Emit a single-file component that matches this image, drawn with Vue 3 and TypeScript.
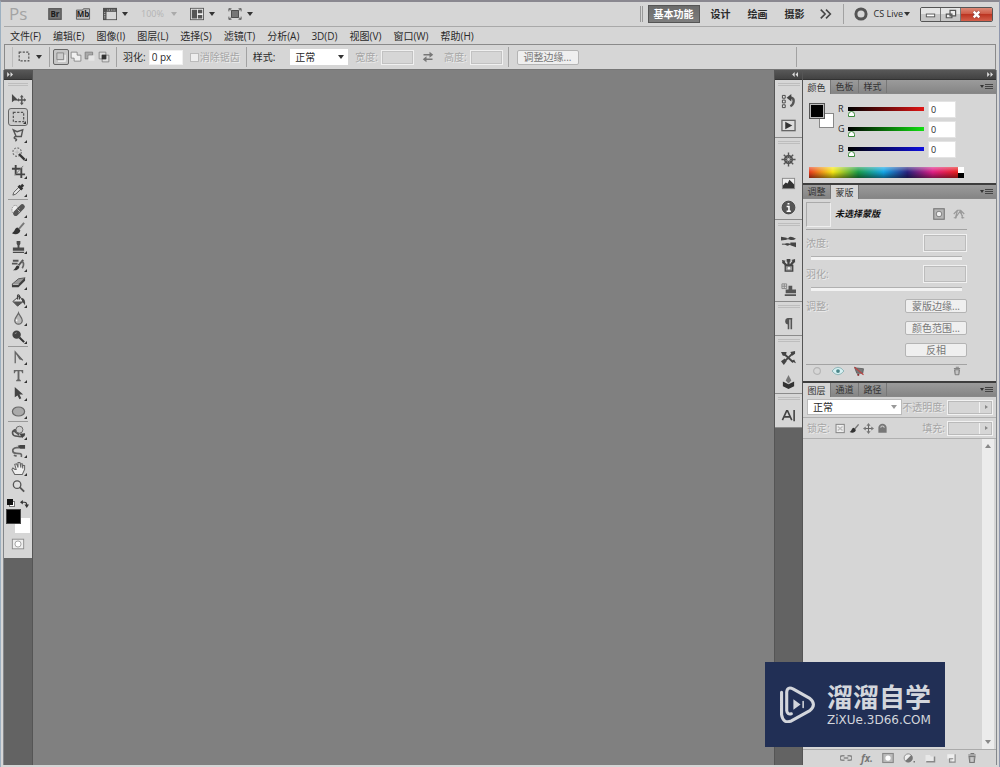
<script setup lang="ts">
import { ref } from 'vue'

const icons: Record<string, string> = {
  move: '<path d="M1 2v9l2.500-2H8z" fill="#4a4a4a"/><path d="M11.500 4.500v8M7.500 8.500h8" stroke="#555" stroke-width="1.500" fill="none"/><path d="M9.500 5.500l2-2.500 2 2.500zM9.500 11.500l2 2.500 2-2.500zM8.500 6.500l-2 2 2 2zM14 6.500l2 2-2 2z" fill="#555"/>',
  marquee: '<rect x="2.500" y="2.500" width="11" height="10" fill="none" stroke="#555" stroke-width="1.300" stroke-dasharray="2.500 1.500"/>',
  lasso: '<path d="M2.500 2l4 2 6-2-1.500 7-5.500 0L2.500 2zM5.500 9c-2 0-3 2-1 2.500s2 1.500 0 2.500" fill="none" stroke="#555" stroke-width="1.500"/>',
  wand: '<circle cx="6.500" cy="6.500" r="4.500" fill="none" stroke="#777" stroke-width="1.300" stroke-dasharray="2 1.500"/><path d="M8.500 8.500l6 6" stroke="#333" stroke-width="2.500"/><path d="M6.500 4v5M4 6.500h5" stroke="#bbb"/>',
  crop: '<path d="M5 1v10h10M1 5h10v10" fill="none" stroke="#444" stroke-width="2"/><path d="M4 12L13 2" stroke="#777"/>',
  dropper: '<path d="M2 14l1-3 6-6 2 2-6 6z" fill="#e8e8e8" stroke="#555"/><path d="M8 4l4 4M10 6l3-3" stroke="#333" stroke-width="3"/>',
  heal: '<ellipse cx="4.500" cy="7.500" rx="3.500" ry="5" fill="#eee" stroke="#888" stroke-dasharray="1.500 1"/><path d="M5 11l7-7" stroke="#555" stroke-width="5.500" stroke-linecap="round"/><path d="M7 7l3 3M8 10h.5M9 6h.5" stroke="#bbb"/>',
  brush: '<path d="M8 9l6-7" stroke="#777" stroke-width="2"/><path d="M1 13c3-1 3-6 6-6l3 3c-1 4-5 5-9 3z" fill="#333"/>',
  stamp: '<path d="M6 2h4v3L9 7v2h5v3.500H2V9h5V7L6 5zM2 13.500h12V15H2z" fill="#4a4a4a"/>',
  history: '<path d="M2 4h6M1 7h6M8 9l5-6" stroke="#555" stroke-width="2"/><path d="M2 14c3-1 3-5 5-5l2 1c0 3-4 5-7 4z" fill="#333"/><path d="M11 5c3 0 3 4 1 7" fill="none" stroke="#666" stroke-width="1.800"/>',
  eraser: '<path d="M1 10l7-6 7-1-7 7z" fill="#999" stroke="#555"/><path d="M1 10h7v3H1zM8 10l7-7v3l-7 7z" fill="#3f3f3f"/><path d="M2 10h6" stroke="#ccc"/>',
  bucket: '<path d="M2 9l7-6 4 6-6 5z" fill="#ddd" stroke="#444"/><path d="M2 9l11 0-6 5z" fill="#555"/><path d="M7 7V2.500Q8 1 9 3v4" fill="none" stroke="#444" stroke-width="1.300"/><path d="M11 5q5 1 4 8L12 9z" fill="#444"/>',
  drop: '<path d="M8 2c1 3 4 5 4 8a4 4 0 01-8 0c0-3 3-5 4-8z" fill="#bbb" stroke="#666" stroke-width="1.300"/><path d="M6 9v2" stroke="#fff" stroke-width="1.500"/>',
  dodge: '<circle cx="6" cy="6" r="4.500" fill="#444"/><path d="M9 9l5 5" stroke="#333" stroke-width="2.200"/><path d="M4 5l2-1" stroke="#999"/>',
  pen: '<path d="M4.500 14V2l8 9" fill="none" stroke="#666" stroke-width="1.400"/><path d="M4 2l9 9-4-1z" fill="#666"/>',
  type: '<path d="M3 2h10v3.500h-1L11 3.500H9V12l1.500 1v1h-5v-1L7 12V3.500H5L4 5.500H3z" fill="#666"/>',
  pick: '<path d="M4 1v11l3-2 2 4 2-1-2-4h4z" fill="#444"/>',
  oval: '<ellipse cx="8" cy="8" rx="6.500" ry="4.800" fill="#aaa" stroke="#666" stroke-width="1.300"/>',
  orbit: '<path d="M6 5c-6 0-6 7 1 7 4 1 8 0 7-3M8 10l-4-3 5-2z" fill="none" stroke="#555" stroke-width="1.800"/><circle cx="9" cy="5" r="3.700" fill="#ccc" stroke="#666"/><path d="M9 9l6 0-3 5z" fill="#444"/>',
  camera: '<path d="M10 5H6C0 6 1 11 6 11c4 0 6 0 5 4M3 13l3 1" fill="none" stroke="#666" stroke-width="1.800"/><path d="M10 2h5v4h-5zM7 3l3-1v4z" fill="#444"/>',
  hand: '<path d="M4 9L2 7.500 1 9l3 5.500h8l2.500-5.500V5l-2-.5V8l-.5-5-1.500 0V7L9.500 1.500H7.500V7L6 3 4 3.500 5.500 9z" fill="#eee" stroke="#666" stroke-width="1.100"/>',
  lens: '<circle cx="6.500" cy="6" r="4" fill="#ddd" stroke="#555" stroke-width="1.400"/><path d="M9.500 9l4.500 4.500" stroke="#555" stroke-width="2"/>',
  quick: '<rect x="1.500" y="2.500" width="13" height="11" fill="#eee" stroke="#888"/><circle cx="8" cy="8" r="3.500" fill="#fff" stroke="#999"/>',
  histpanel: '<path d="M1.500 1.500h3v3h-3zM1.500 6.500h3v3h-3zM1.500 11.500h3v3h-3z" fill="#ddd" stroke="#444"/><path d="M10 4h1c4 1 3 7-1 9" stroke="#555" stroke-width="2.500" fill="none"/><path d="M6 4l5-4v8z" fill="#444"/>',
  play: '<rect x="1" y="2.500" width="14" height="11" fill="#ddd" stroke="#666" stroke-width="1.400"/><path d="M4.500 4v8L12 8z" fill="#333"/>',
  wheel: '<circle cx="8" cy="8" r="4" fill="none" stroke="#444" stroke-width="1.600"/><path d="M8 .500v15M.500 8h15M3 3l10 10M13 3L3 13" stroke="#555" stroke-width="1.500"/><circle cx="8" cy="8" r="1.500" fill="#ccc"/>',
  histo: '<rect x="1.500" y="2.500" width="13" height="11" fill="#eee" stroke="#888"/><path d="M2 13V10l3-3 2 1 2-4 3 3 2 2v4z" fill="#333"/>',
  info: '<circle cx="8" cy="8" r="6.800" fill="#555" stroke="#444"/><path d="M7 4h2M6 7h2.500v4.500M6 12h4.500" stroke="#fff" stroke-width="1.700" fill="none"/>',
  sliders: '<path d="M1 5h13M1 11h14" stroke="#777" stroke-width="1.700"/><path d="M0 3l6 1v2L0 7zM8 4c2-2 4-1 8 1-3 2-6 2-8 0zM4 11c2-2 4-1 6 0-2 2-4 2-6 0zM10 9h6v5l-6-2z" fill="#444"/>',
  brushes: '<path d="M4.500 8h8v6h-8z" fill="#999" stroke="#444" stroke-width="1.400"/><path d="M6 8L2 4M8 8V2M10 8l4-5" stroke="#444" stroke-width="2.500"/><path d="M1 2l4 1-3 3zM6 1h4v3H6zM11 2l4-1v4z" fill="#444"/><circle cx="8.500" cy="11" r="1.300" fill="#eee"/>',
  clone: '<path d="M8 4h4v4h4v4H5V8h3zM4 13h12v2H4z" fill="#555"/><path d="M1 2h5v5H1zM1 4.500h5M3.500 2v5" fill="none" stroke="#888"/>',
  para: '<path d="M8 14V3M11 14V3M7 3h5" stroke="#555" stroke-width="1.700"/><path d="M8 2a3.500 3.500 0 000 7z" fill="#555"/>',
  cross: '<path d="M2 3l11 10M3 13L13 3" stroke="#444" stroke-width="2"/><path d="M0 2l6 0-1 4-3 0zM10 2l5-1 0 3-3 2zM0 12l4-3 2 3-3 4zM11 12l3-2 2 4z" fill="#444"/>',
  book: '<path d="M2 8l6 3 6-3v5l-6 3-6-3z" fill="#333"/><path d="M5 7l3-6 3 6-3 3z" fill="#777"/>',
  achar: '<path d="M1.500 13L6 3h1l4.500 10M3.500 9.500h6M14 2v12" fill="none" stroke="#444" stroke-width="1.700"/>',
  bridge: '<rect x="1" y="2" width="14" height="12" fill="#777" stroke="#555" stroke-width="1.500"/>',
  mini: '<path d="M.500 3.500h7l1-1.500h7v12H.500z" fill="#bbb" stroke="#555"/>',
  arrange: '<rect x="0" y="1" width="16" height="14" fill="#505050"/><path d="M4 5.500h11V14H4z" fill="#d8d8d8"/><path d="M5 3.500h10M2 6v8" stroke="#eee" stroke-dasharray="1 1"/>',
  grid: '<rect x=".500" y="1.500" width="15" height="13" fill="#eee" stroke="#555"/><path d="M2 3h6v10H2zM9 3h5v4H9zM9 9h5v4H9z" fill="#555"/>',
  screen: '<path d="M4 4h8v8H4z" fill="#777" stroke="#444"/><path d="M1 5V2h3M12 2h3v3M1 11v3h3M12 14h3v-3M1 2l3 2M15 2l-3 2M1 14l3-2M15 14l-3-2" fill="none" stroke="#555"/>',
  m0: '<path d="M2.500 2.500h9v9h-9z" fill="#ccc" stroke="#777"/><path d="M4 13.500h9.500V5" fill="none" stroke="#f5f5f5" stroke-width="1.500"/>',
  m1: '<path d="M1.500 1.500h8v4h5v8h-9v-4h-4z" fill="#f0f0f0" stroke="#777"/>',
  m2: '<path d="M1.500 1.500h10v4h-6v5h-4z" fill="#aaa" stroke="#777"/><path d="M6 6h8v7H6z" fill="#e5e5e5"/>',
  m3: '<path d="M1.500 1.500h9v9h-9zM5.500 5.500h9v9h-9z" fill="#ddd" stroke="#777"/><path d="M5 5h6v6H5z" fill="#333"/>',
  swap: '<path d="M2 5h11M3 11h11" stroke="#777" stroke-width="1.700"/><path d="M10 1l5 4-5 4zM6 7l-5 4 5 4z" fill="#777"/>',
  ring: '<circle cx="8" cy="8" r="5.800" fill="none" stroke="#555" stroke-width="3.400"/>',
  more: '<path d="M2 3l5 5-5 5M8 3l5 5-5 5" fill="none" stroke="#444" stroke-width="1.800"/>',
  maskadd: '<rect x="1" y="1" width="14" height="14" fill="#b5b5b5" stroke="#777" stroke-width="1.500"/><circle cx="8" cy="8" r="3.700" fill="#eee" stroke="#666"/>',
  vector: '<path d="M3 14L6 3h4l3 11M4 12l5-7 4 6M1 8l5-5M10 3l5 5M1 13h4M11 13h4" fill="none" stroke="#999" stroke-width="1.500"/>',
  circ: '<circle cx="8" cy="8" r="4.500" fill="none" stroke="#b5b5b5" stroke-width="1.500"/>',
  eye: '<path d="M0 8q8-10 16 0-8 10-16 0z" fill="#d6f0f2" stroke="#7aa5a8"/><circle cx="8" cy="8" r="2.500" fill="#4a8589"/>',
  cart: '<path d="M2 3l3 1 9 1-1 6H5z" fill="#777" stroke="#555"/><path d="M2 3l12 10" stroke="#b44" stroke-width="1.500"/><circle cx="7" cy="13" r="1.500" fill="#833"/>',
  trash: '<path d="M4 6h8l-1 8H5zM3 4h10M6 2h5" fill="#aaa" stroke="#777" stroke-width="1.400"/><path d="M7 7v6M9 7v6" stroke="#ddd"/>',
  link: '<path d="M6 5H3a3 3 0 000 6h3M10 5h3a3 3 0 010 6h-3M5 8h6" fill="none" stroke="#888" stroke-width="2"/>',
  mask: '<rect x="1" y="2" width="14" height="12" fill="#bbb" stroke="#888" stroke-width="1.500"/><circle cx="8" cy="8" r="3.500" fill="#fff"/>',
  adjust: '<circle cx="7" cy="8" r="5.500" fill="#eee" stroke="#777"/><path d="M11 4l-8 8a5.500 5.500 0 008-8z" fill="#777"/><path d="M14 13h2" stroke="#777" stroke-width="2"/>',
  folder: '<path d="M2 4h6l1 2h5v7H2z" fill="#e8e8e8"/><path d="M3 13h11V6" fill="none" stroke="#888" stroke-width="2"/>',
  page: '<path d="M3 3h11v11H9V9H3z" fill="#eee"/><path d="M13.500 3v10.500H6V9h5" fill="none" stroke="#888" stroke-width="1.500"/>',
  pixels: '<rect x="1.500" y="2" width="12" height="12" fill="#eee" stroke="#888" stroke-width="1.500"/><path d="M4 5l7 6M11 5l-7 6" stroke="#bbb" stroke-width="2"/>',
  cross4: '<path d="M8 2v12M2 8h12" stroke="#666" stroke-width="1.500"/><path d="M5 4l3-4 3 4zM5 12l3 4 3-4zM4 5L0 8l4 3zM12 5l4 3-4 3z" fill="#777"/>',
  lock: '<path d="M2 14V7a6 6 0 0112 0v7z" fill="#777"/><path d="M5.500 7a2.500 2.500 0 015 0" fill="none" stroke="#ccc" stroke-width="1.500"/>',
  swapc: '<path d="M3 4h5q4 0 4 5" fill="none" stroke="#333" stroke-width="2"/><path d="M5 0v8L0 4zM8 8h8l-4 6z" fill="#333"/>',
}

const menus = ['文件(F)', '编辑(E)', '图像(I)', '图层(L)', '选择(S)', '滤镜(T)', '分析(A)', '3D(D)', '视图(V)', '窗口(W)', '帮助(H)']
const toolGroups = [
  ['move', 'marquee', 'lasso', 'wand', 'crop', 'dropper'],
  ['heal', 'brush', 'stamp', 'history', 'eraser', 'bucket', 'drop', 'dodge'],
  ['pen', 'type', 'pick', 'oval'],
  ['orbit', 'camera', 'hand', 'lens'],
]
const plainTools = ['move', 'lens']
const dockGroups = [['histpanel', 'play'], ['wheel', 'histo', 'info'], ['sliders', 'brushes', 'clone'], ['para'], ['cross', 'book'], ['achar']]
const activeTool = ref('marquee')
const mode = ref('m0')
const workspace = ref('基本功能')
const channels = ref([
  { name: 'R', value: 0, cls: 'red' },
  { name: 'G', value: 0, cls: 'green' },
  { name: 'B', value: 0, cls: 'blue' },
])
const maskButtons = ['蒙版边缘...', '颜色范围...', '反相']
</script>

<template>
  <div class="app">
    <header class="topbar">
      <span class="ps">Ps</span>
      <button class="ic badge br" aria-label="Bridge"><svg viewBox="0 0 16 16" v-html="icons.bridge" /><span>Br</span></button>
      <button class="ic badge mb" aria-label="Mini Bridge"><svg viewBox="0 0 16 16" v-html="icons.mini" /><span>Mb</span></button>
      <button class="drop" aria-label="View extras"><svg viewBox="0 0 16 16" v-html="icons.arrange" /><i class="tri" /></button>
      <button class="drop zoom">100%<i class="tri" /></button>
      <button class="drop" aria-label="Arrange documents"><svg viewBox="0 0 16 16" v-html="icons.grid" /><i class="tri" /></button>
      <button class="drop" aria-label="Screen mode"><svg viewBox="0 0 16 16" v-html="icons.screen" /><i class="tri" /></button>
      <div class="right">
        <i class="grip2" />
        <nav class="spaces">
          <button v-for="w in ['基本功能', '设计', '绘画', '摄影']" :key="w" :class="{ on: w === workspace }" @click="workspace = w">{{ w }}</button>
        </nav>
        <button class="ic more" aria-label="More"><svg viewBox="0 0 16 16" v-html="icons.more" /></button>
        <i class="vline" />
        <button class="cslive"><svg viewBox="0 0 16 16" v-html="icons.ring" />CS Live<i class="tri" /></button>
        <div class="win">
          <button aria-label="Minimize"><svg viewBox="0 0 20 14"><rect x="5.500" y="6.500" width="9" height="3" fill="#fff" stroke="#555" /></svg></button>
          <button aria-label="Restore"><svg viewBox="0 0 20 14"><path d="M9.500 2.500h6v6h-6zM5.500 6.500h6v4h-6z" fill="#eee" stroke="#555" stroke-width="1.300" /></svg></button>
          <button class="close" aria-label="Close"><svg viewBox="0 0 20 14"><path d="M7 4l6 6M13 4l-6 6" stroke="#844" stroke-width="4" /><path d="M7 4l6 6M13 4l-6 6" stroke="#fff" stroke-width="2.600" /></svg></button>
        </div>
      </div>
    </header>

    <nav class="menu"><button v-for="m in menus" :key="m">{{ m }}</button></nav>

    <section class="options">
      <i class="vline faint" />
      <button class="drop current" aria-label="Tool presets"><svg viewBox="0 0 16 16" v-html="icons.marquee" /><i class="tri" /></button>
      <i class="vline" />
      <div class="modes">
        <button v-for="m in ['m0', 'm1', 'm2', 'm3']" :key="m" :class="{ on: m === mode }" :aria-label="m" @click="mode = m"><svg viewBox="0 0 16 16" v-html="icons[m]" /></button>
      </div>
      <i class="vline" />
      <label class="field">羽化:<input class="feather" value="0 px"></label>
      <label class="check off"><input type="checkbox" disabled>消除锯齿</label>
      <i class="vline" />
      <label class="field style">样式:<span class="pick"><select><option>正常</option></select><i class="tri" /></span></label>
      <label class="field off">宽度:<input disabled></label>
      <button class="ic swap" aria-label="Swap"><svg viewBox="0 0 16 16" v-html="icons.swap" /></button>
      <label class="field off">高度:<input disabled></label>
      <i class="vline" />
      <button class="push refine" disabled>调整边缘...</button>
      <i class="vline last" />
    </section>

    <main class="work">
      <aside class="tools">
        <div class="dockhead"><svg viewBox="0 0 8 6"><path d="M0 0l3 3-3 3zM4 0l3 3-3 3z" fill="#ddd" /></svg></div>
        <div class="toolbody">
          <i class="grip" />
          <div v-for="(g, i) in toolGroups" :key="i" class="tgroup">
            <button v-for="t in g" :key="t" :class="{ on: t === activeTool, fly: !plainTools.includes(t) }" :aria-label="t" @click="activeTool = t"><svg viewBox="0 0 16 16" v-html="icons[t]" /></button>
          </div>
          <div class="minirow"><span class="defaults" /><button aria-label="Swap colours"><svg viewBox="0 0 16 16" v-html="icons.swapc" /></button></div>
          <div class="swatches"><span class="bg" /><span class="fg" /></div>
          <button class="quick" aria-label="Quick mask"><svg viewBox="0 0 16 16" v-html="icons.quick" /></button>
        </div>
      </aside>

      <div class="canvas" />

      <aside class="icondock">
        <div class="dockhead end"><svg viewBox="0 0 8 6"><path d="M3 0L0 3l3 3zM7 0L4 3l3 3z" fill="#ddd" /></svg></div>
        <div v-for="(g, i) in dockGroups" :key="i" class="dgroup">
          <button v-for="d in g" :key="d" :aria-label="d"><svg viewBox="0 0 16 16" v-html="icons[d]" /></button>
        </div>
      </aside>

      <aside class="panels">
        <div class="dockhead end"><svg viewBox="0 0 8 6"><path d="M0 0l3 3-3 3zM4 0l3 3-3 3z" fill="#ddd" /></svg></div>
        <section class="panel">
          <div class="tabs"><button class="on">颜色</button><button>色板</button><button>样式</button><i class="tri" /><i class="flymenu" /></div>
          <div class="color">
            <div class="mix">
              <div class="pair"><span class="bg" /><span class="fg" /></div>
              <div class="chs">
                <label v-for="c in channels" :key="c.name" class="ch">{{ c.name }}
                  <input v-model.number="c.value" type="range" min="0" max="255" :class="c.cls">
                  <input v-model.number="c.value" class="num" :aria-label="c.name">
                </label>
              </div>
            </div>
            <div class="spectrum"><i class="hues" /><i class="bw" /></div>
          </div>
        </section>

        <section class="panel">
          <div class="tabs"><button>调整</button><button class="on">蒙版</button><i class="tri" /><i class="flymenu" /></div>
          <div class="masks">
            <div class="mhead"><i class="thumb" /><em>未选择蒙版</em><svg viewBox="0 0 16 16" v-html="icons.maskadd" /><svg viewBox="0 0 16 16" v-html="icons.vector" /></div>
            <label class="mrow off">浓度:<input disabled></label><i class="groove" />
            <label class="mrow off">羽化:<input disabled></label><i class="groove" />
            <div class="mrefine"><span class="off">调整:</span><div><button v-for="b in maskButtons" :key="b" class="push" disabled>{{ b }}</button></div></div>
            <div class="mfoot"><svg v-for="n in ['circ', 'eye', 'cart', 'trash']" :key="n" viewBox="0 0 16 16" v-html="icons[n]" /></div>
          </div>
        </section>

        <section class="panel layers">
          <div class="tabs"><button class="on">图层</button><button>通道</button><button>路径</button><i class="tri" /><i class="flymenu" /></div>
          <div class="lrow">
            <span class="pick blend"><select aria-label="Blend mode"><option>正常</option></select><i class="tri" /></span>
            <label class="off">不透明度:<span class="combo"><input disabled><i class="tri side" /></span></label>
          </div>
          <div class="lrow lock">
            <span class="off">锁定:</span>
            <svg v-for="n in ['pixels', 'brush', 'cross4', 'lock']" :key="n" viewBox="0 0 16 16" v-html="icons[n]" />
            <label class="off">填充:<span class="combo"><input disabled><i class="tri side" /></span></label>
          </div>
          <div class="list"><div class="scroll"><i class="tri up" /><i class="tri" /></div></div>
          <div class="lfoot">
            <svg viewBox="0 0 16 16" v-html="icons.link" /><span class="fx">fx.</span>
            <svg v-for="n in ['mask', 'adjust', 'folder', 'page', 'trash']" :key="n" viewBox="0 0 16 16" v-html="icons[n]" />
          </div>
        </section>
      </aside>
    </main>

    <div class="brand">
      <svg viewBox="0 0 34 36" fill="none" stroke="#d3d6dc" stroke-linecap="round" stroke-linejoin="round">
        <path d="M1.500 6v22Q3 37 11 34L29 24Q36 18 29 12L13 3Q7 0 6.500 6V24Q7 28 11 27" stroke-width="3" />
        <path d="M13 13v10l7-5z" fill="#d3d6dc" stroke="none" /><path d="M22.500 15v6" stroke-width="1.500" />
      </svg>
      <div><strong>溜溜自学</strong><span>ZiXUe.3D66.COM</span></div>
    </div>
  </div>
</template>

<style>
html, body { margin: 0; background: #d6d6d6; }
</style>

<style scoped>
* { box-sizing: border-box; }
.app { position: relative; display: flex; flex-direction: column; height: 100vh; padding: 0 3px 2px; overflow: hidden; background: #d6d6d6; border-top: 2px solid #8a8890; border-left: 1px solid #9db0c0; border-right: 1px solid #8f97ad; font: 10px/14px "Open Sans", "Noto Sans CJK SC", sans-serif; color: #2a2a2a; }
button, input, select { font: inherit; color: inherit; margin: 0; padding: 0; border: 0; background: none; border-radius: 0; }
svg { display: block; width: 14px; height: 14px; flex: none; }
i { display: block; flex: none; }
.tri { border: 3px solid transparent; border-top: 4px solid #333; border-bottom: 0; }
.tri.up { border-top: 0; border-bottom: 4px solid #888; }
.tri.side { border: 2px solid transparent; border-left: 3px solid #888; border-right: 0; }
.off { color: #a6a6a6; text-shadow: 1px 1px 0 #ececec; }
.vline { width: 1px; height: 20px; background: #a2a2a2; }
.faint { background: #bcbcbc; }

.topbar { display: flex; align-items: center; flex: none; height: 25px; padding-left: 5px; border-bottom: 1px solid #a9a9a9; }
.ps { width: 39px; font-size: 17px; line-height: 20px; color: #a3a3a3; }
.badge { display: grid; width: 14px; margin-right: 13px; place-items: center; }
.badge > * { grid-area: 1 / 1; }
.badge span { font-size: 8px; font-weight: 700; line-height: 14px; color: #1c1c1c; }
.badge.mb { width: 16px; margin-right: 12px; }
.badge.mb svg { width: 16px; }
.drop { display: flex; align-items: center; gap: 5px; margin-right: 13px; }
.zoom { color: #b4b4b4; font-size: 9px; gap: 7px; }
.zoom .tri { border-top-color: #aaa; }
.right { display: flex; align-items: center; margin-left: auto; padding-right: 3px; }
.grip2 { width: 3px; height: 16px; margin-right: 5px; border: solid #999; border-width: 0 1px; }
.spaces { display: flex; gap: 5px; }
.spaces button { height: 18px; padding: 0 6px; font-weight: 700; }
.spaces .on { width: 52px; color: #fff; background: linear-gradient(#6b6b6b, #7e7e7e); border: 1px solid #555; padding: 0; }
.more { margin: 0 10px 0 8px; }
.cslive { display: flex; align-items: center; margin: 0 10px; font-size: 9px; }
.cslive svg { margin-right: 6px; }
.cslive .tri { margin-left: 1px; }
.win { display: flex; height: 15px; border: 1px solid #555; border-radius: 2px; overflow: hidden; }
.win button { width: 20px; background: linear-gradient(#e4e4e4 50%, #c6c6c6 50%); border-right: 1px solid #777; }
.win svg { width: 19px; height: 13px; }
.win .close { display: grid; width: 31px; place-items: center; background: linear-gradient(#dc8a78, #cd5540 50%, #bc3522 50%, #d4604c); border: 0; }

.menu { display: flex; align-items: center; gap: 12px; flex: none; height: 17px; padding: 0 6px; }
.menu button { white-space: nowrap; line-height: 16px; }
.options { display: flex; align-items: center; flex: none; height: 26px; padding-left: 7px; border: 1px solid #8a8a8a; border-bottom-color: #777; white-space: nowrap; }
.current { margin: 0 7px 0 4px; }
.modes { display: flex; margin: 0 5px 0 3px; }
.modes button { width: 14px; height: 16px; display: grid; place-items: center; }
.modes svg { width: 12px; height: 12px; }
.modes .on { width: 16px; background: #c6c6c6; border: 1px solid #666; border-radius: 2px; }
.field { display: flex; align-items: center; gap: 3px; margin-left: 6px; }
.field input { width: 33px; height: 15px; border: 1px solid #f0f0f0; outline: 1px solid #c2c2c2; outline-offset: -2px; }
.field .feather { width: 34px; padding-left: 2px; background: #fff; outline: 0; }
.check { display: flex; align-items: center; gap: 1px; margin: 0 6px 0 7px; }
.check input { width: 9px; height: 9px; appearance: none; background: #eee; border: 1px solid #bbb; }
.pick { display: grid; align-items: center; background: #fff; }
.pick > * { grid-area: 1 / 1; }
.pick select { width: 100%; height: 100%; padding-left: 5px; appearance: none; }
.pick .tri { justify-self: end; margin-right: 4px; pointer-events: none; }
.style { gap: 15px; margin-right: 1px; }
.style .pick { width: 58px; height: 16px; }
.swap { margin: 0 4px 0 8px; }
.swap svg { width: 12px; height: 12px; }
.field + .vline { margin-left: 5px; }
.push { height: 14px; border: 1px solid #b4b4b4; border-radius: 2px; background: #efefef; color: #777; line-height: 12px; }
.refine { width: 62px; height: 15px; margin-left: 8px; }
.last { margin: 0 198px 0 auto; }

.work { display: flex; flex: 1; min-height: 0; background: #636363; box-shadow: -1px 0 0 #84888c, 1px 0 0 #84888c; }
.dockhead { display: flex; align-items: center; flex: none; height: 10px; padding: 0 3px; background: linear-gradient(#585858, #424242); border-bottom: 1px solid #333; }
.dockhead svg { width: 7px; height: 5px; }
.end { justify-content: flex-end; }
.tools { flex: none; width: 29px; border-right: 1px solid #555; }
.toolbody { display: flex; flex-direction: column; align-items: center; height: 478px; background: #d6d6d6; }
.grip { width: 20px; height: 3px; margin: 3px 0 4px; border: solid #bdbdbd; border-width: 1px 0; }
.tgroup { border-bottom: 1px solid #999; padding-bottom: 1px; margin-bottom: 1px; }
.tgroup:nth-of-type(4) { border: 0; }
.tgroup button { position: relative; display: grid; place-items: center; width: 20px; height: 18px; }
.tgroup svg, .dgroup svg { width: 15px; height: 15px; }
.tgroup .on { border: 1px solid #666; border-radius: 3px; background: #cbcbcb; }
.fly::after { content: ""; position: absolute; right: 1px; bottom: 1px; border-left: 3px solid transparent; border-bottom: 3px solid #333; }
.minirow { display: flex; justify-content: space-between; width: 22px; height: 12px; padding-top: 2px; }
.minirow svg { width: 9px; height: 9px; }
.defaults { width: 6px; height: 6px; background: #111; box-shadow: 2px 2px 0 -1px #fff, 2px 2px 0 #777; }
.swatches, .pair { position: relative; width: 24px; height: 24px; }
.swatches span, .pair span { position: absolute; width: 15px; height: 15px; }
.fg { top: 0; left: 0; background: #000; border: 1px solid #444; }
.bg { right: 0; bottom: 0; background: #fff; }
.quick { margin-top: 4px; }
.canvas { flex: 1; background: #808080; }
.icondock { flex: none; width: 29px; border: solid #555; border-width: 0 1px; }
.dgroup { display: flex; flex-direction: column; align-items: center; padding-top: 3px; background: #d6d6d6; border-bottom: 1px solid #8b8b8b; }
.dgroup::before { content: ""; width: 22px; height: 1px; margin-bottom: 3px; border: solid #bdbdbd; border-width: 1px 0; }
.dgroup button { display: grid; place-items: center; width: 24px; height: 24px; }
.panels { display: flex; flex-direction: column; flex: none; width: 193px; background: #d6d6d6; }
.panels .end { padding-right: 2px; }
.panel + .panel { border-top: 2px solid #3d3d3d; }
.tabs { display: flex; height: 14px; background: linear-gradient(#9b9b9b, #858585); border-bottom: 1px solid #888; line-height: 13px; }
.tabs button { width: 28px; border-right: 1px solid #777; color: #333; font-size: 9px; line-height: 13px; }
.tabs .on { background: #d6d6d6; height: 14px; }
.tabs .tri { border-width: 3px 2px 0; margin: 5px 1px 0 auto; }
.flymenu { width: 8px; height: 5px; margin: 4px 3px 0 0; border: solid #444; border-width: 1px 0; background: linear-gradient(transparent 1px, #444 1px 2px, transparent 2px); }
.color { display: flex; flex-direction: column; height: 89px; padding: 5px 0 0 6px; }
.mix { display: flex; }
.pair { width: 25px; height: 25px; margin-top: 4px; }
.pair .fg { width: 16px; height: 16px; border: 1px solid #555; outline: 1px solid #bbb; outline-offset: -2px; }
.pair .bg { border: 1px solid #888; }
.chs { margin-left: 4px; }
.ch { display: flex; align-items: center; width: 118px; height: 20px; white-space: nowrap; font-size: 9px; }
.ch input[type="range"] { width: 76px; height: 16px; margin: 0 4px 0 auto; appearance: none; }
.ch .num { width: 28px; height: 17px; padding-left: 2px; background: #fff; border: 1px solid #e3e3e3; }
.ch input::-webkit-slider-runnable-track { height: 4px; }
.red::-webkit-slider-runnable-track { background: linear-gradient(90deg, #000, #e01515); }
.green::-webkit-slider-runnable-track { background: linear-gradient(90deg, #000, #12e012); }
.blue::-webkit-slider-runnable-track { background: linear-gradient(90deg, #000, #1010e0); }
.ch input::-webkit-slider-thumb { appearance: none; width: 7px; height: 6px; margin-top: 4px; background: #fff; border: 1px solid #3c8a3c; border-radius: 4px 4px 0 0; }
.spectrum { display: flex; width: 155px; height: 11px; margin-top: 8px; }
.hues { flex: 1; background: linear-gradient(#ffffff60, #00000000 45%, #00000070), linear-gradient(90deg, #e8391c, #f6e813 16%, #1a9c48 33%, #12a6e6 50%, #29217f 66%, #df1f86 83%, #e8201c); }
.bw { width: 6px; background: linear-gradient(#fff 50%, #000 50%); }

.masks { display: flex; flex-direction: column; height: 182px; width: 164px; padding-left: 3px; }
.mhead { display: flex; align-items: center; height: 31px; border-bottom: 1px solid #a3a3a3; }
.mhead .thumb { width: 25px; height: 25px; border: 1px solid #aaa; border-right-color: #eee; border-bottom-color: #eee; }
.mhead em { margin: 0 auto 0 4px; font-weight: 700; color: #111; font-size: 9px; }
.mhead svg { width: 12px; height: 12px; margin-right: 2px; }
.mhead svg + svg { margin-left: 6px; }
.mrow { display: flex; align-items: center; justify-content: space-between; height: 25px; }
.mrow input { width: 44px; height: 18px; border: 1px solid #f0f0f0; outline: 1px solid #bcbcbc; outline-offset: -2px; }
.groove { height: 4px; margin: 1px 5px; background: #f2f2f2; border-top: 1px solid #b0b0b0; }
.mrefine { display: flex; justify-content: space-between; margin-top: 7px; flex: 1; }
.mrefine div { display: flex; flex-direction: column; gap: 8px; }
.mrefine .push { width: 62px; }
.mfoot { display: flex; align-items: center; gap: 9px; height: 17px; padding: 0 5px 4px; border-top: 1px solid #a3a3a3; }
.mfoot svg { width: 12px; height: 12px; }
.mfoot svg:last-child { margin-left: auto; width: 10px; }

.layers { display: flex; flex: 1; flex-direction: column; min-height: 0; }
.lrow { display: flex; align-items: center; height: 21px; padding: 0 3px 0 4px; border-bottom: 1px solid #b0b0b0; white-space: nowrap; }
.lrow label { display: flex; align-items: center; gap: 2px; margin-left: auto; }
.blend { width: 95px; height: 16px; border: 1px solid #bbb; }
.blend .tri { border-top-color: #999; }
.combo { display: flex; align-items: center; width: 46px; height: 15px; border: 1px solid #f2f2f2; outline: 1px solid #bababa; outline-offset: -2px; }
.combo input { width: 32px; height: 11px; border-right: 1px solid #f2f2f2; }
.combo .side { margin-left: 5px; }
.lock span + svg { margin-left: 5px; }
.lock svg { width: 11px; height: 11px; margin-left: 3px; }
.list { display: flex; flex: 1; justify-content: flex-end; }
.scroll { display: flex; flex-direction: column; justify-content: space-between; align-items: center; width: 12px; margin-right: 2px; padding: 5px 0; background: #ececec; }
.scroll .tri { border-top-color: #888; }
.lfoot { display: flex; align-items: center; gap: 9px; height: 16px; padding-left: 37px; border-top: 1px solid #aaa; }
.lfoot svg { width: 12px; height: 12px; }
.fx { width: 12px; font-style: italic; color: #777; font-weight: 700; }

.brand { position: absolute; right: 54px; bottom: 20px; display: flex; align-items: center; gap: 12px; width: 180px; height: 85px; padding-left: 15px; background: #212f55; color: #d3d6dc; }
.brand svg { width: 35px; height: 37px; }
.brand div { display: flex; flex-direction: column; }
.brand strong { font: 700 26px/30px "Liberation Sans", "Noto Sans CJK SC", sans-serif; }
.brand span { font: 12px/14px "DejaVu Sans", sans-serif; }
</style>
